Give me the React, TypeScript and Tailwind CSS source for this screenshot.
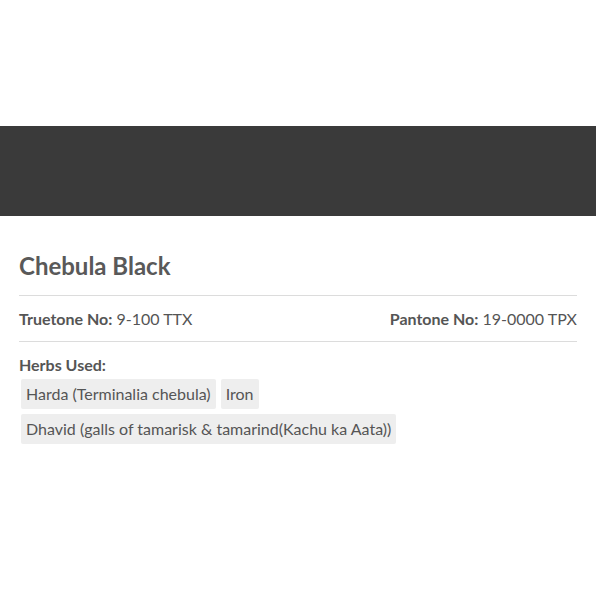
import React from 'react';

const herbs = ['Harda (Terminalia chebula)', 'Iron', 'Dhavid (galls of tamarisk & tamarind(Kachu ka Aata))'];

const App: React.FC = () => {
  return (
    <div className="min-h-[600px] bg-white text-[#555] font-['Lato',sans-serif]">
      <div className="h-[126px]" />
      <div className="h-[90px] w-[596px] bg-[#3a3a3a]" />
      <div className="px-[19px] w-[596px]">
        <h1 className="mt-[37px] text-[24px] leading-[26px] font-bold text-[#595959]">Chebula Black</h1>
        <div className="mt-[16px] border-t border-[#dcdcdc] w-[558px]" />
        <div className="h-[46px] w-[558px] flex items-center justify-between text-[16px] border-b border-[#dcdcdc]">
          <p>
            <span className="font-bold">Truetone No:</span> 9-100 TTX
          </p>
          <p>
            <span className="font-bold">Pantone No:</span> 19-0000 TPX
          </p>
        </div>
        <p className="mt-[12px] text-[16px] leading-[22px] font-bold">Herbs Used:</p>
        <div className="mt-[3px] pl-[2px] flex flex-wrap gap-[5px] w-[500px]">
          {herbs.map((h) => (
            <span key={h} className="h-[30px] px-[5px] flex items-center bg-[#eeeeee] rounded-[2px] text-[16px]">
              {h}
            </span>
          ))}
        </div>
      </div>
    </div>
  );
};

export default App;
